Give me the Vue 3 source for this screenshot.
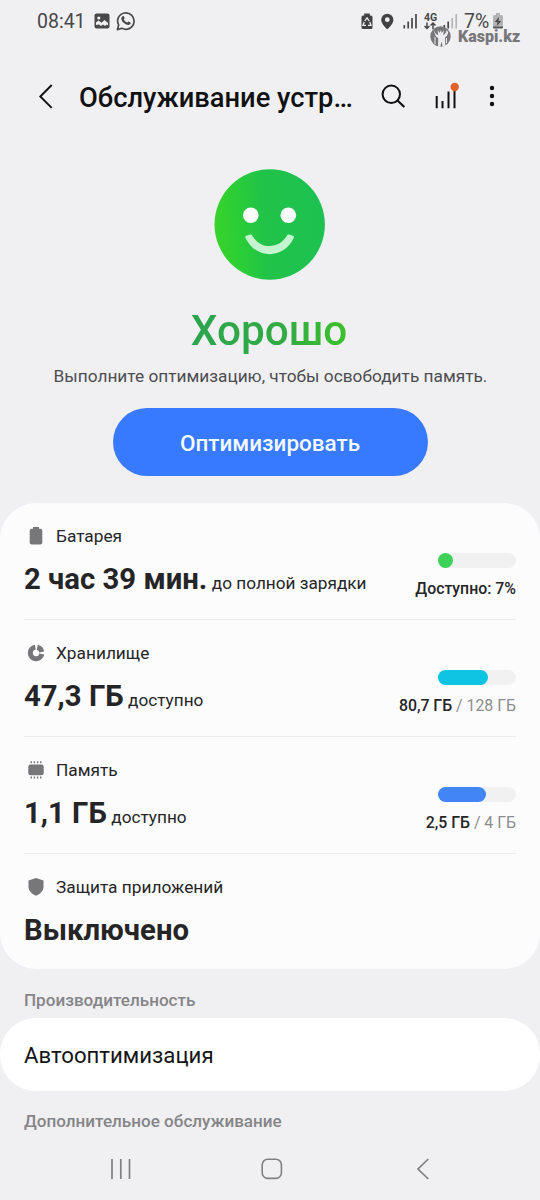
<script setup>
const rows = [
  { icon: 'battery', label: 'Батарея', value: '2 час 39 мин.', note: 'до полной зарядки', fill: 15, color: '#3dd158', strong: 'Доступно: 7%', rest: '' },
  { icon: 'storage', label: 'Хранилище', value: '47,3 ГБ', note: 'доступно', fill: 50, color: '#0fc3e3', strong: '80,7 ГБ', rest: ' / 128 ГБ' },
  { icon: 'memory', label: 'Память', value: '1,1 ГБ', note: 'доступно', fill: 48, color: '#4285f4', strong: '2,5 ГБ', rest: ' / 4 ГБ' },
  { icon: 'shield', label: 'Защита приложений', value: 'Выключено', note: '' },
]
</script>

<template>
  <div class="screen">
    <div class="status">
      <span class="time">08:41</span>
      <svg class="pic" width="16" height="16" viewBox="0 0 16 16">
        <rect x=".5" y=".5" width="15" height="15" rx="2" fill="#48484a" />
        <circle cx="4.8" cy="5" r="1.600" fill="#f0f0f3" />
        <path d="M2 12V9.500L4.500 7.500l3 2.300L10.500 7l3.500 3v2.500l-1.500-1-1.500 1.500-2-1.500-2 1.500-2-1.500z" fill="#f0f0f3" />
      </svg>
      <svg class="wa" width="20" height="20" viewBox="0 0 20 20">
        <path d="M1.400 18.600l1.300-4.500A8.200 8.200 0 1 1 6 17.300z" fill="none" stroke="#48484a" stroke-width="1.700" stroke-linejoin="round" />
        <path d="M6.300 5.400c.7-.7 1.400-.5 1.700.2l.6 1.500c.1.500-.6 1-.8 1.400.8 1.500 1.900 2.500 3.500 3.100.5-.3.900-1.200 1.400-1l1.700.8c.6.3.3 1.400-.3 1.900-1 .9-2.500.7-3.900.1-2.200-.9-4-2.800-4.700-4.700-.4-1.300-.1-2.400.8-3.300z" fill="#48484a" />
      </svg>
      <svg class="right-icons" width="102" height="32" viewBox="0 0 102 32">
        <path d="M4.200 1.500h5.600v2h1.200q1.500 0 1.500 1.500v10.500q0 1.500-1.500 1.500H3q-1.500 0-1.500-1.500V5q0-1.500 1.500-1.500h1.200z" fill="#414143" />
        <path d="M4.800 9L7 5.800 9.200 9M9.800 10l1.200 3.300H8M6 13.300H3L4.200 10" fill="none" stroke="#f0f0f3" stroke-width="1.300" />
        <path d="M27.300 1.800a6.100 6.100 0 0 0-6.100 6.100c0 4 6.100 9.300 6.100 9.300s6.100-5.300 6.100-9.300a6.100 6.100 0 0 0-6.100-6.100z" fill="#414143" /><circle cx="27.300" cy="7.700" r="2.400" fill="#f0f0f3" />
        <g stroke="#48484a" stroke-width="1.700"><path d="M44.300 13v3.500M48.200 9.500v7M52 6v10.500M56 2v14.500" /></g>
        <text x="64" y="9.300" class="net">4G</text>
        <path d="M67 10.500v6m-2.500-2.500L67 16.500l2.500-2.500M73 17v-6m-2.500 2.500L73 11l2.500 2.500" fill="none" stroke="#48484a" stroke-width="1.500" />
        <g stroke-width="1.700"><path d="M84.300 13v3.500M88.200 9.500v7" stroke="#48484a" /><path d="M92.200 6v10.500M96.200 2v14.500" stroke="#b5b5b7" /></g>
      </svg>
      <span class="pct">7%</span>
      <svg class="charge" width="12" height="18" viewBox="0 0 12 18">
        <path d="M4 1h4v2h1.500Q11 3 11 4.500V16H1V4.500Q1 3 2.500 3H4z" fill="#b2b2b4" />
        <path d="M1 14.500h10v1q0 1-1 1H2q-1 0-1-1z" fill="#58585a" /><path d="M7 5L2.800 10h2.700l-.7 4L9.300 9H6.500z" fill="#48484a" />
      </svg>
      <div class="watermark">
        <svg width="21" height="21" viewBox="0 0 21 21">
          <circle cx="10.500" cy="10.500" r="10.200" fill="#77777a" />
          <path d="M4.200 3.500c.3 3 1.800 5.200 4 5.700L7.700 4l2 3 1.100-3 1 3 2.200-3-.8 5c2.300-.7 3.200-2.500 3.300-5.200l1.700 2.500c-.5 3-2 4.300-3.200 5.200l.3 8.200-2.600.8-1.200-5-1.200 5.200H8L8.300 12C6 11 4.300 8.500 4.200 3.500z" fill="#ededf0" />
          <path d="M5 11v7M16.500 12v5" stroke="#ededf0" stroke-width="1" />
        </svg>
        <span>Kaspi.kz</span>
      </div>
    </div>

    <header class="bar">
      <svg class="back" width="16" height="28" viewBox="0 0 16 28"><path d="M13.700 2L2.300 13.500l11.400 11.300" fill="none" stroke="#111" stroke-width="1.900" /></svg>
      <h1>Обслуживание устр…</h1>
      <svg class="search" width="26" height="26" viewBox="0 0 26 26"><circle cx="10.300" cy="10.300" r="8.700" fill="none" stroke="#111" stroke-width="2" /><path d="M16.500 16.500l6.800 6.500" stroke="#111" stroke-width="2.200" /></svg>
      <svg class="stats" width="26" height="28" viewBox="0 0 26 28"><path d="M3.700 14v12.200M9.500 19v7.200M15.500 9.500v16.700M21.500 6v20.200" stroke="#111" stroke-width="2" /><circle cx="21.700" cy="5" r="4.200" fill="#e06327" /></svg>
      <svg class="more" width="6" height="22" viewBox="0 0 6 22"><g fill="#111"><circle cx="3" cy="3" r="2.200" /><circle cx="3" cy="11" r="2.200" /><circle cx="3" cy="19" r="2.200" /></g></svg>
    </header>

    <section class="hero">
      <svg class="face" width="112" height="112" viewBox="0 0 112 112">
        <defs><linearGradient id="faceFill" x1="0" y1=".55" x2="1" y2=".45">
          <stop offset="0" stop-color="#39d32a" /><stop offset=".2" stop-color="#2bce35" /><stop offset=".45" stop-color="#21c348" /><stop offset="1" stop-color="#1dc151" />
        </linearGradient></defs>
        <circle cx="55.700" cy="56.500" r="55.200" fill="url(#faceFill)" />
        <circle cx="36.800" cy="47.300" r="7.800" fill="#fff" /><circle cx="74.300" cy="47.300" r="7.800" fill="#fff" />
        <path transform="translate(0 .5)" d="M31.500 69.500Q30.800 68 32.200 67.200L36 66Q37.500 65.700 38.300 67C46 81 65 81 73 67Q73.800 65.700 75.200 66L79 67.200Q80.500 68 79.700 69.500C70 91 41.500 91 31.500 69.500z" fill="#c6f3d0" />
      </svg>
      <div class="state"><span>Хорошо</span></div>
      <p>Выполните оптимизацию, чтобы освободить память.</p>
      <button>Оптимизировать</button>
    </section>

    <section class="card">
      <div v-for="r in rows" :key="r.icon" class="row">
        <div class="info">
          <div class="label">
            <svg width="24" height="24" viewBox="0 0 24 24" fill="#77777a">
              <path v-if="r.icon === 'battery'" d="M9 3h6v1.700h1.300Q18.300 4.700 18.300 6.700V18.500q0 2-2 2H7.700q-2 0-2-2V6.700Q5.700 4.700 7.700 4.700H9z" />
              <g v-else-if="r.icon === 'storage'" fill="none" stroke="#77777a" stroke-width="5"><path d="M11.300 6.200a5.800 5.800 0 1 0 6.500 6.800" /><path d="M13.300 6.300a5.800 5.800 0 0 1 4.400 4.700" /></g>
              <g v-else-if="r.icon === 'memory'"><rect x="4.300" y="6.500" width="15.400" height="10.800" rx="2.500" /><path d="M7.300 3.200v2M10.400 3.200v2M13.600 3.200v2M16.700 3.200v2M7.300 18.500v2M10.400 18.500v2M13.600 18.500v2M16.700 18.500v2" stroke="#77777a" stroke-width="1.400" /></g>
              <path v-else d="M12 3l7.500 2.600v6c0 4.400-3.300 7.500-7.500 9.200-4.200-1.700-7.500-4.800-7.500-9.200v-6z" />
            </svg>
            <span>{{ r.label }}</span>
          </div>
          <div class="value"><b>{{ r.value }}</b><span v-if="r.note">{{ r.note }}</span></div>
        </div>
        <div v-if="r.strong" class="usage">
          <div class="track"><div class="fill" :style="{ width: r.fill + 'px', background: r.color }"></div></div>
          <div class="caption"><b>{{ r.strong }}</b><span>{{ r.rest }}</span></div>
        </div>
      </div>
    </section>

    <h2 class="perf">Производительность</h2>
    <section class="single"><span>Автооптимизация</span></section>
    <h2 class="extra">Дополнительное обслуживание</h2>

    <nav>
      <svg width="22" height="22" viewBox="0 0 22 22"><path d="M2 1v20M10.800 1v20M19.500 1v20" stroke="#808082" stroke-width="1.700" /></svg>
      <svg width="22" height="22" viewBox="0 0 22 22"><rect x="1.200" y="1.200" width="19.200" height="19.200" rx="5.500" fill="none" stroke="#808082" stroke-width="1.600" /></svg>
      <svg width="14" height="22" viewBox="0 0 14 22"><path d="M12.300 1L2 11l10.300 10" fill="none" stroke="#808082" stroke-width="1.700" /></svg>
    </nav>
  </div>
</template>

<style>
body { margin: 0; background: #f0f0f3; }
</style>
<style scoped>
.screen { width: 540px; height: 1200px; overflow: hidden; background: #f0f0f3; font-family: Roboto, "Liberation Sans", sans-serif; display: flex; flex-direction: column; }
.status { height: 44px; flex: none; display: flex; align-items: flex-start; position: relative; color: #48484a; font-size: 19.500px; line-height: 18px; padding-left: 37px; box-sizing: border-box; }
.time { margin-top: 13px; width: 57px; white-space: nowrap; }
.pic { margin-top: 13px; }
.wa { margin: 11px 0 0 6px; }
.right-icons { margin: 12px 0 0 224px; flex: none; }
.net { font: 700 10.500px Roboto, sans-serif; fill: #48484a; }
.pct { margin: 13px 0 0 2px; width: 28px; flex: none; white-space: nowrap; }
.charge { margin-top: 12px; flex: none; }
.watermark { position: absolute; left: 430px; top: 26px; display: flex; align-items: center; gap: 7px; color: #77777a; font: 900 16px/13px Roboto, sans-serif; }
.bar { height: 106px; flex: none; display: flex; align-items: center; padding-left: 38px; box-sizing: border-box; }
.back { flex: none; }
h1 { font-size: 27.300px; line-height: 32px; font-weight: 500; margin: 0 0 0 25px; padding-top: 2px; width: 302px; flex: none; white-space: nowrap; color: #111; }
.search { flex: none; }
.stats { margin: -3px 0 0 26px; flex: none; }
.more { margin-left: 30px; flex: none; margin-top: -2px; }
.hero { height: 353px; flex: none; display: flex; flex-direction: column; align-items: center; box-sizing: border-box; padding-top: 18px; }
.face { flex: none; }
.state { margin-top: 26px; font-size: 42.300px; line-height: 50px; font-weight: 500; height: 50px; margin-right: 2px; }
.state span { background: linear-gradient(90deg, #2ba54e, #32ab43 60%, #3cc12c); -webkit-background-clip: text; background-clip: text; color: transparent; }
p { margin: 9px 0 0 1px; font-size: 17.280px; line-height: 22px; color: #4d4d51; white-space: nowrap; }
button { margin: 21px 0 0; width: 315px; height: 68px; flex: none; border: 0; border-radius: 34px; background: #387aff; color: #f4fbff; font: 500 22.500px/68px Roboto, sans-serif; padding: 1px 0 0; box-sizing: border-box; }
.card { height: 466px; flex: none; background: #fcfcfd; border-radius: 36px; padding: 0 24px; box-sizing: border-box; }
.row { height: 117px; box-sizing: border-box; display: flex; justify-content: space-between; border-bottom: 1px solid #ececee; color: #252527; }
.row:last-child { border: 0; }
.label { display: flex; align-items: center; gap: 8px; height: 24px; margin-top: 21px; font-size: 17.300px; }
.value { margin-top: 12px; line-height: 38px; white-space: nowrap; display: flex; align-items: baseline; gap: 4.500px; }
.value b { font-size: 29.300px; font-weight: 700; }
.value span { font-size: 17.200px; }
.usage { display: flex; flex-direction: column; align-items: flex-end; padding-top: 49.500px; }
.track { width: 78px; height: 15px; border-radius: 8px; background: #f1f1f2; }
.fill { height: 15px; border-radius: 8px; }
.caption { margin-top: 11.500px; font-size: 15.850px; line-height: 20px; white-space: pre; }
.caption b { font-weight: 500; }
.caption span { color: #8c8c8f; }
h2 { margin: 0 0 0 24px; font-size: 17.080px; line-height: 22px; font-weight: 500; color: #858588; flex: none; white-space: nowrap; }
.perf { margin-top: 20px; }
.single { margin-top: 7px; height: 73px; flex: none; box-sizing: border-box; border-radius: 36px; background: #fff; padding: 0 0 0 24px; display: flex; align-items: center; font-size: 22.200px; color: #151517; }
.extra { margin-top: 19px; }
nav { margin-top: 26px; flex: none; display: flex; align-items: center; padding-left: 110px; }
nav svg + svg { margin-left: 129px; }
nav svg + svg + svg { margin-left: 133px; }
</style>
